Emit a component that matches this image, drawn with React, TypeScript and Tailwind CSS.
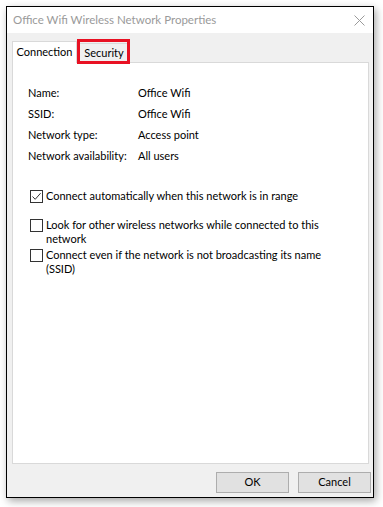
import type { ReactNode } from 'react';

const FONT = { fontFamily: 'Lato, "Noto Sans", "Liberation Sans", sans-serif' };

function CheckBox({ checked, children }: { checked?: boolean; children: ReactNode }) {
  return (
    <div className="flex items-start gap-[3px]">
      <div className="mt-[1px] flex h-[13px] w-[13px] shrink-0 items-center justify-center border border-[#333] bg-white">
        {checked && (
          <svg width="11" height="11" viewBox="0 0 11 11">
            <path d="M1.5 5.5 L4.2 8.3 L9.6 2.2" fill="none" stroke="#333" strokeWidth="1" />
          </svg>
        )}
      </div>
      <span className="leading-[14px]">{children}</span>
    </div>
  );
}

function Row({ label, value }: { label: string; value: string }) {
  return (
    <div className="flex h-[21px] items-center whitespace-nowrap">
      <span className="w-[110px]">{label}</span>
      <span>{value}</span>
    </div>
  );
}

export default function App() {
  return (
    <div className="h-[507px] w-[383px] bg-white pl-[6px] pt-[6px] text-[11px] text-black" style={FONT}>
      <div className="flex h-[492px] w-[368px] flex-col border border-black shadow-[2px_3px_8px_rgba(0,0,0,0.35)]">
        <div className="flex h-[26px] items-center justify-between bg-white pl-[6px] pr-[8px]">
          <span className="text-[11.5px] text-[#9a9a9a]">Office Wifi Wireless Network Properties</span>
          <svg width="11" height="11" viewBox="0 0 11 11">
            <path d="M0.5 0.5 L10.5 10.5 M10.5 0.5 L0.5 10.5" stroke="#9a9a9a" strokeWidth="1" />
          </svg>
        </div>
        <div className="flex flex-1 flex-col bg-[#f0f0f0] pl-[5px] pr-[4px] pt-[8px]">
          <div className="flex items-end">
            <div className="relative z-10 -mb-px flex h-[22px] w-[65px] items-center justify-center border border-b-0 border-[#d9d9d9] bg-white">
              Connection
            </div>
            <div className="relative ml-px flex h-[19px] w-[52px] items-center justify-center border border-b-0 border-[#d9d9d9] bg-[#f0f0f0]">
              Security
              <div className="absolute -left-[2px] -top-[5px] h-[25px] w-[53px] border-[3px] border-[#e81123]" />
            </div>
          </div>
          <div className="flex h-[402px] flex-col border border-[#d9d9d9] bg-white px-[15px] pt-[20px]">
            <div className="flex flex-col">
              <Row label="Name:" value="Office Wifi" />
              <Row label="SSID:" value="Office Wifi" />
              <Row label="Network type:" value="Access point" />
              <Row label="Network availability:" value="All users" />
            </div>
            <div className="mt-[22px] flex flex-col gap-[15px] pl-[2px]">
              <CheckBox checked>Connect automatically when this network is in range</CheckBox>
              <div className="flex flex-col gap-[2px] pr-[25px]">
                <CheckBox>Look for other wireless networks while connected to this network</CheckBox>
                <CheckBox>Connect even if the network is not broadcasting its name (SSID)</CheckBox>
              </div>
            </div>
          </div>
          <div className="-mr-[2px] flex justify-end gap-[9px] pt-[8px]">
            <button className="h-[21px] w-[73px] border border-[#adadad] bg-[#e1e1e1]">OK</button>
            <button className="h-[21px] w-[73px] border border-[#adadad] bg-[#e1e1e1]">Cancel</button>
          </div>
        </div>
      </div>
    </div>
  );
}
